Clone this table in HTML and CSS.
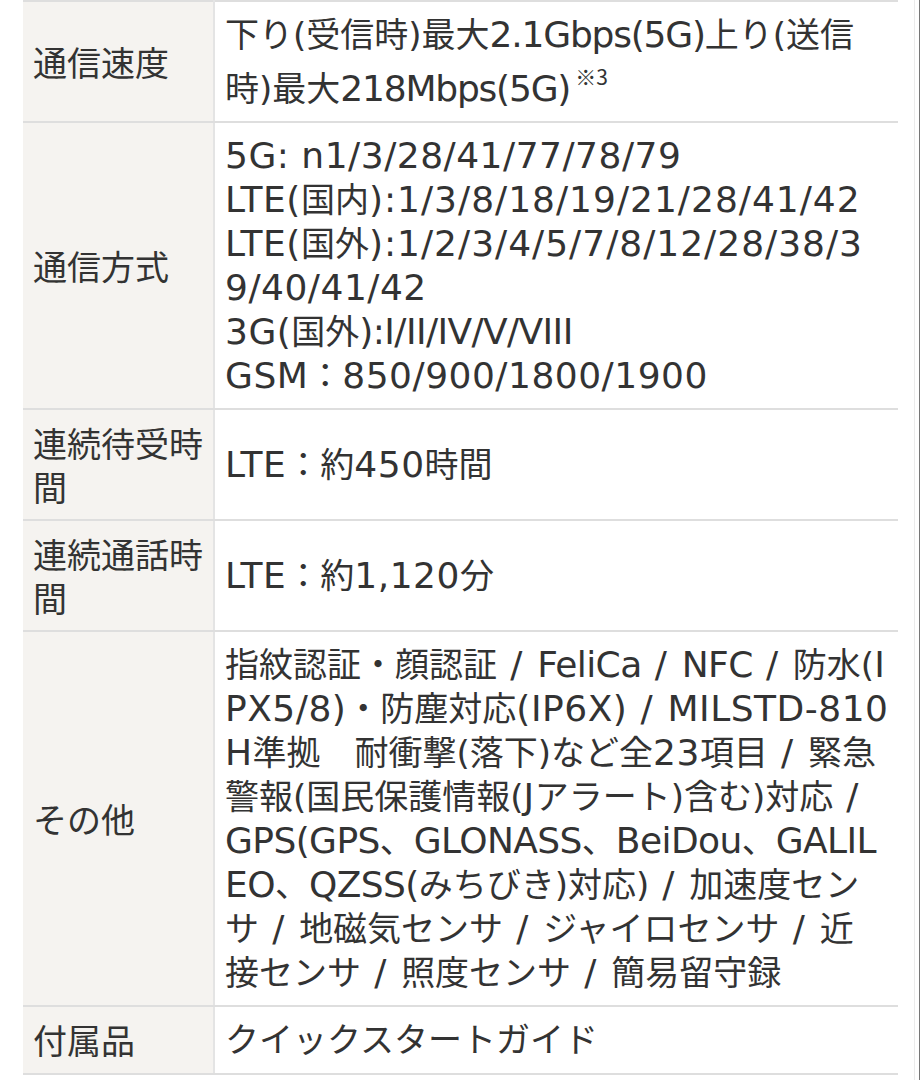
FILE: index.html
```html
<!DOCTYPE html>
<html lang="ja">
<head>
<meta charset="utf-8">
<title>スペック</title>
<link rel="stylesheet" href="styles.css">
</head>
<body>
<div class="page">
  <table class="spec">
    <tr>
      <th class="label">通信速度</th>
      <td class="value">
        <span class="line">下り(受信時)最大<span class="en tighter">2.1Gbps(5G)</span>上り(送信</span>
        <span class="line line-sup">時)最大<span class="en tighter">218Mbps(5G)</span><sup class="note">※3</sup></span>
      </td>
    </tr>
    <tr>
      <th class="label">通信方式</th>
      <td class="value"><span class="en">5G: n1/3/28/41/77/78/79</span><br><span class="en">LTE(</span>国内<span class="en num">):1/3/8/18/19/21/28/41/42</span><br><span class="en">LTE(</span>国外<span class="en num">):1/2/3/4/5/7/8/12/28/38/3</span><br><span class="en">9/40/41/42</span><br><span class="en">3G(</span>国外<span class="en tight">):I/II/IV/V/VIII</span><br><span class="en">GSM</span>：<span class="en">850/900/1800/1900</span></td>
    </tr>
    <tr>
      <th class="label">連続待受時<br>間</th>
      <td class="value"><span class="en">LTE</span>：約<span class="en">450</span>時間</td>
    </tr>
    <tr>
      <th class="label">連続通話時<br>間</th>
      <td class="value"><span class="en">LTE</span>：約<span class="en">1,120</span>分</td>
    </tr>
    <tr>
      <th class="label">その他</th>
      <td class="value">指紋認証・顔認証<span class="en sl"> / </span><span class="en tight">FeliCa</span><span class="en sl"> / </span><span class="en tight">NFC</span><span class="en sl"> / </span>防水(<span class="en">I</span><br><span class="en">PX5/8)</span>・防塵対応<span class="en">(IP6X)</span><span class="en sl"> / </span><span class="en">MILSTD-810</span><br><span class="en">H</span>準拠　耐衝撃(落下)など全<span class="en">23</span>項目<span class="en sl"> / </span>緊急<br>警報(国民保護情報(<span class="en">J</span>アラート)含む)対応<span class="en sl"> /</span><br><span class="en tight">GPS(GPS</span>、<span class="en tight">GLONASS</span>、<span class="en tight">BeiDou</span>、<span class="en tight">GALIL</span><br><span class="en tight">EO</span>、<span class="en tight">QZSS(</span>みちびき)対応)<span class="en sl"> / </span>加速度セン<br>サ<span class="en sl"> / </span>地磁気センサ<span class="en sl"> / </span>ジャイロセンサ<span class="en sl"> / </span>近<br>接センサ<span class="en sl"> / </span>照度センサ<span class="en sl"> / </span>簡易留守録</td>
    </tr>
    <tr class="last">
      <th class="label">付属品</th>
      <td class="value">クイックスタートガイド</td>
    </tr>
  </table>
</div>
</body>
</html>
```

FILE: styles.css
```css
html, body {
  margin: 0;
  padding: 0;
  background: #ffffff;
}

body {
  width: 919px;
  border-right: 1px solid #777777;
  font-family: "DejaVu Sans", "Noto Sans CJK JP", sans-serif;
  color: #333333;
}

.page {
  width: 915px;
  min-height: 1080px;
  border-right: 1px solid #ebebeb;
  padding-left: 23px;
  box-sizing: border-box;
}

.spec {
  width: 873px;
  border-collapse: collapse;
  border-top: 2px solid #dedede;
  font-size: 34px;
  line-height: 44px;
}

.spec th,
.spec td {
  border-bottom: 2px solid #dedede;
  padding: 11px 10px 10px;
  text-align: left;
  font-weight: 400;
}

.label {
  width: 175px;
  background: #f5f3f0;
  border-right: 2px solid #e4e4e4;
  vertical-align: middle;
  white-space: nowrap;
  font-family: "Noto Sans CJK JP", sans-serif;
}

.value {
  vertical-align: middle;
  white-space: nowrap;
  padding-left: 9px;
}

.en {
  font-family: "DejaVu Sans", sans-serif;
  font-size: 36px;
  line-height: 36px;
  letter-spacing: 0.5px;
}

.num {
  letter-spacing: 1px;
}

.tight {
  letter-spacing: -0.6px;
}

.tighter {
  letter-spacing: -1.2px;
}

.sl {
  letter-spacing: 1.7px;
}

.line {
  display: block;
}

.line-sup {
  padding-top: 9px;
}

.note {
  font-family: "Noto Sans CJK JP", sans-serif;
  font-size: 21px;
  line-height: 1;
  vertical-align: 16px;
  margin-left: 5px;
}

.last th,
.last td {
  padding-top: 11px;
  padding-bottom: 11px;
}
```
